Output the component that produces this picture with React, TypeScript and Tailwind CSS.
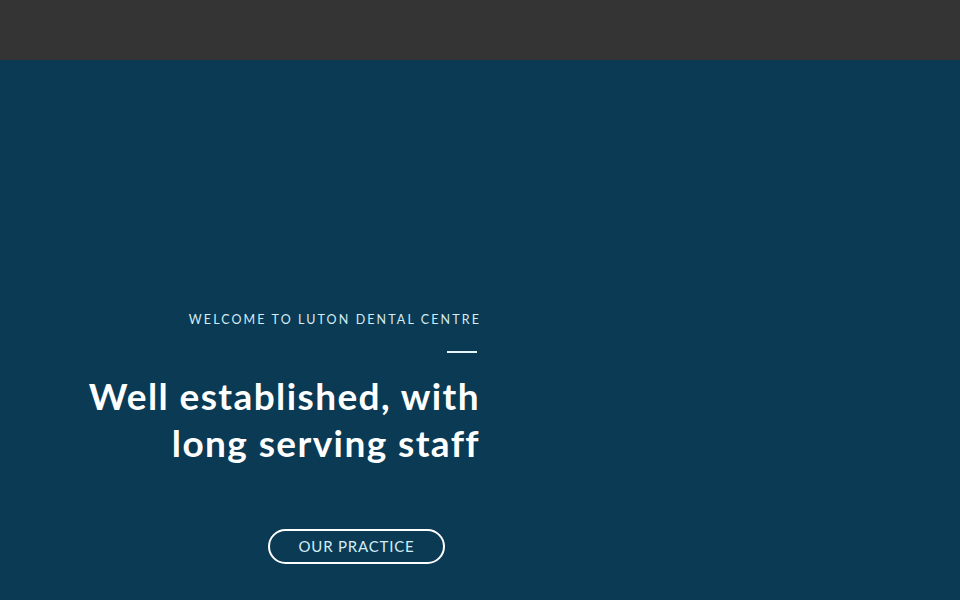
export default function App() {
  return (
    <div className="w-[960px] h-[600px] overflow-hidden" style={{ fontFamily: "Lato, 'Noto Sans', sans-serif" }}>
      <div className="h-[60px] bg-[#343434]" />
      <div className="h-[540px] bg-[#0a3a54] flex">
        <div className="w-[480px] pt-[252px] flex flex-col items-end">
          <div className="text-[12.5px] leading-[16px] tracking-[2.1px] text-[#d4ecf4] mr-[-1px]">WELCOME TO LUTON DENTAL CENTRE</div>
          <div className="mt-[23px] mr-[3px] w-[30px] h-[2px] bg-[#e6f6fa]" />
          <h1 className="mt-[19px] text-right text-[37px] leading-[47px] font-bold text-white tracking-[1.4px] mr-[0px]">
            Well established, with<br />long serving staff
          </h1>
          <button className="mt-[63px] mr-[35px] w-[177px] h-[35px] rounded-full border-2 border-white text-[15px] tracking-[0.8px] text-[#d4ecf4] flex items-center justify-center">
            OUR PRACTICE
          </button>
        </div>
      </div>
    </div>
  );
}
